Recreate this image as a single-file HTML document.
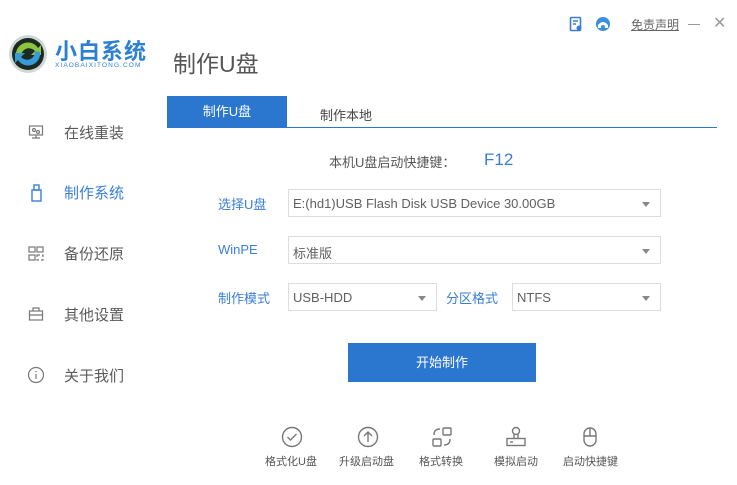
<!DOCTYPE html><html><head><meta charset="utf-8"><style>
*{margin:0;padding:0;box-sizing:border-box}
body{width:737px;height:485px;background:#fff;position:relative;overflow:hidden;font-family:"Liberation Sans","Noto Sans CJK SC",sans-serif;color:#555}
.a{position:absolute;white-space:nowrap}
.nav{font-size:15px;color:#5a5a5a;left:64px}
.nv{color:#3a7fd5}
.box{position:absolute;border:1px solid #ddd;height:28px;font-size:13px;color:#606060;padding:6px 0 0 4px;background:#fff}
.box:after{content:"";position:absolute;right:10px;top:12px;border:4px solid transparent;border-top:5px solid #888}
.lb{font-size:13px;color:#3a7fd5}
.bi{position:absolute;top:426px;width:22px;height:22px}
.bt{font-size:11px;color:#555;top:453px}
</style></head><body>
<svg class="a" style="left:8px;top:34px" width="40" height="40" viewBox="0 0 40 40"><circle cx="20" cy="20" r="19" fill="#cfd8d4"/><circle cx="20" cy="20" r="16" fill="#1c2a22"/><path d="M8 22a12 12 0 0 1 22-8l3-3v10h-10l4-4a8 8 0 0 0-14 6z" fill="#8cc63e"/><path d="M32 18a12 12 0 0 1-22 8l-3 3V19h10l-4 4a8 8 0 0 0 14-6z" fill="#3a9ad9"/></svg>
<div class="a" style="left:55px;top:34px;font-size:22px;font-weight:600;color:#2d7fd4;letter-spacing:1px">小白系统</div>
<div class="a" style="left:55px;top:62px;font-size:6.5px;color:#2d7fd4;letter-spacing:1.1px">XIAOBAIXITONG.COM</div>
<div class="a" style="left:173px;top:45px;font-size:23px;color:#555">制作U盘</div>
<svg class="a" style="left:569px;top:16px" width="14" height="16"><rect x="1.5" y="1.5" width="10" height="13" rx="1" fill="none" stroke="#3a7fd5" stroke-width="1.6"/><path d="M4 5h5M4 8h3" stroke="#3a7fd5" stroke-width="1.4"/><circle cx="10" cy="12" r="2.5" fill="#3a7fd5"/></svg>
<svg class="a" style="left:595px;top:16px" width="16" height="16"><circle cx="8" cy="8" r="7" fill="#3a8fe0"/><path d="M3 9q5-6 10 0v3H3z" fill="#fff"/><circle cx="8" cy="11" r="2" fill="#3a8fe0"/></svg>
<div class="a" style="left:631px;top:16px;font-size:12px;color:#666;text-decoration:underline">免责声明</div>
<div class="a" style="left:688px;top:24px;width:12px;height:1px;background:#999"></div>
<div class="a" style="left:713px;top:13px;font-size:16px;color:#999">✕</div>
<div class="a" style="left:167px;top:96px;width:120px;height:31px;background:#2b76cf;color:#fff;font-size:13px;text-align:center;line-height:31px">制作U盘</div>
<div class="a" style="left:320px;top:105px;font-size:13px;color:#444">制作本地</div>
<div class="a" style="left:167px;top:127px;width:550px;height:1px;background:#2b76cf"></div>
<svg class="a" style="left:28px;top:124px" width="16" height="16" fill="none" stroke="#777" stroke-width="1.2"><rect x="1.5" y="2" width="13" height="9"/><path d="M8 11v3M4 14h8"/><circle cx="6" cy="6" r="1.5"/><circle cx="10" cy="8" r="1.5"/></svg>
<div class="a nav" style="top:122px">在线重装</div>
<svg class="a" style="left:31px;top:184px" width="12" height="18" fill="none" stroke="#3a7fd5" stroke-width="1.4"><rect x="1" y="6" width="9" height="11"/><rect x="3" y="1" width="5" height="5"/></svg>
<div class="a nav nv" style="top:182px">制作系统</div>
<svg class="a" style="left:28px;top:246px" width="16" height="16" fill="none" stroke="#777" stroke-width="1.2"><rect x="1" y="1" width="6" height="5"/><rect x="9" y="1" width="6" height="5"/><rect x="1" y="9" width="6" height="5"/><path d="M9 9h6v5h-6z" stroke-dasharray="3 2"/></svg>
<div class="a nav" style="top:243px">备份还原</div>
<svg class="a" style="left:28px;top:306px" width="16" height="16" fill="none" stroke="#777" stroke-width="1.2"><rect x="1.5" y="5" width="13" height="9"/><path d="M5 5V2h6v3M1.5 9h13"/></svg>
<div class="a nav" style="top:304px">其他设置</div>
<svg class="a" style="left:27px;top:366px" width="18" height="18" fill="none" stroke="#777" stroke-width="1.2"><circle cx="9" cy="9" r="7.5"/><path d="M9 8v5M9 5v1.2"/></svg>
<div class="a nav" style="top:365px">关于我们</div>
<div class="a" style="left:329px;top:152px;font-size:13px;color:#555">本机U盘启动快捷键：</div>
<div class="a" style="left:484px;top:150px;font-size:17px;color:#3a7fd5">F12</div>
<div class="a lb" style="left:218px;top:194px">选择U盘</div>
<div class="box" style="left:288px;top:189px;width:373px">E:(hd1)USB Flash Disk USB Device 30.00GB</div>
<div class="a lb" style="left:218px;top:242px">WinPE</div>
<div class="box" style="left:288px;top:236px;width:373px">标准版</div>
<div class="a lb" style="left:218px;top:288px">制作模式</div>
<div class="box" style="left:288px;top:283px;width:149px">USB-HDD</div>
<div class="a lb" style="left:446px;top:288px">分区格式</div>
<div class="box" style="left:512px;top:283px;width:149px">NTFS</div>
<div class="a" style="left:348px;top:343px;width:188px;height:39px;background:#2b76cf;color:#fff;font-size:13px;text-align:center;line-height:39px">开始制作</div>
<svg class="bi" style="left:281px" viewBox="0 0 22 22" fill="none" stroke="#777" stroke-width="1.4"><circle cx="11" cy="11" r="9.5"/><path d="M6.5 11l3 3 6-6"/></svg>
<svg class="bi" style="left:357px" viewBox="0 0 22 22" fill="none" stroke="#777" stroke-width="1.4"><circle cx="11" cy="11" r="9.5"/><path d="M11 16V6M7 10l4-4 4 4"/></svg>
<svg class="bi" style="left:431px" viewBox="0 0 22 22" fill="none" stroke="#777" stroke-width="1.4"><rect x="12" y="2" width="8" height="7" rx="1"/><rect x="2" y="13" width="8" height="7" rx="1"/><path d="M3 9q0-6 6-6M19 13q0 6-6 6"/></svg>
<svg class="bi" style="left:505px" viewBox="0 0 22 22" fill="none" stroke="#777" stroke-width="1.4"><circle cx="11" cy="5" r="3.5"/><path d="M9 8.5v4M13 8.5v4"/><rect x="2" y="12.5" width="18" height="7"/><path d="M5 16h3"/></svg>
<svg class="bi" style="left:579px" viewBox="0 0 22 22" fill="none" stroke="#777" stroke-width="1.4"><rect x="5" y="2" width="12" height="18" rx="6"/><path d="M5 10h12M11 2v8"/></svg>
<div class="a bt" style="left:265px">格式化U盘</div>
<div class="a bt" style="left:339px">升级启动盘</div>
<div class="a bt" style="left:419px">格式转换</div>
<div class="a bt" style="left:494px">模拟启动</div>
<div class="a bt" style="left:563px">启动快捷键</div>
</body></html>
